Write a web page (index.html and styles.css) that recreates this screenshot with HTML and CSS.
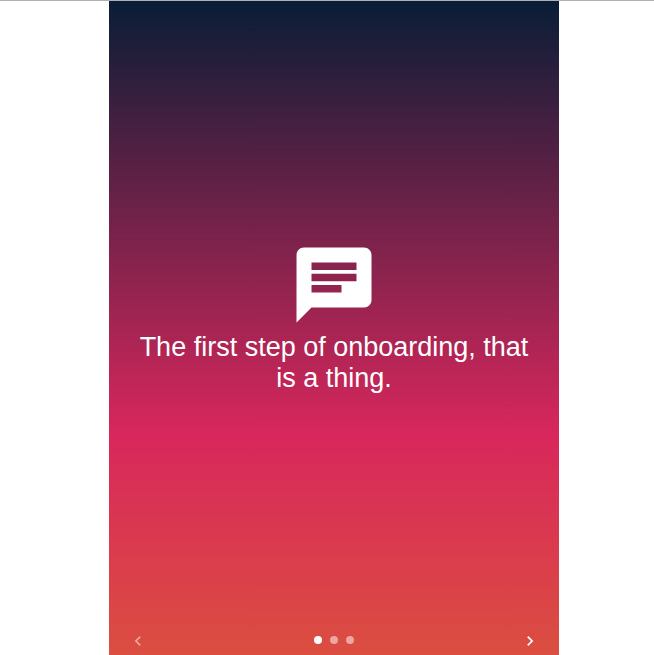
FILE: index.html
```html
<!DOCTYPE html>
<html lang="en">
<head>
<meta charset="utf-8">
<meta name="viewport" content="width=device-width, initial-scale=1">
<title>Onboarding</title>
<link rel="stylesheet" href="styles.css">
</head>
<body>
<main class="onboarding">
  <section class="step">
    <svg class="step-icon" viewBox="0 0 24 24" aria-hidden="true"><path d="M20 2H4c-1.100 0-1.990.9-1.990 2L2 22l4-4h14c1.100 0 2-.9 2-2V4c0-1.100-.9-2-2-2zM6 9h12v2H6V9zm8 5H6v-2h8v2zm4-6H6V6h12v2z"/></svg>
    <p class="step-text">The first step of onboarding, that is a thing.</p>
  </section>
  <nav class="controls" aria-label="Steps">
    <button class="arrow" type="button" aria-label="Previous" disabled><svg viewBox="0 0 24 24"><path d="M15.410 7.410L14 6l-6 6 6 6 1.410-1.410L10.830 12z"/></svg></button>
    <div class="dots">
      <button class="dot active" type="button" aria-label="Step 1" aria-current="step"></button>
      <button class="dot" type="button" aria-label="Step 2"></button>
      <button class="dot" type="button" aria-label="Step 3"></button>
    </div>
    <button class="arrow" type="button" aria-label="Next"><svg viewBox="0 0 24 24"><path d="M10 6L8.590 7.410 13.170 12l-4.580 4.590L10 18l6-6z"/></svg></button>
  </nav>
</main>
</body>
</html>
```
FILE: styles.css
```css
* {
  box-sizing: border-box;
}

body {
  margin: 0;
  min-height: 100vh;
  padding-left: 14px;
  border-top: 1px solid #b0b0b0;
  display: flex;
  justify-content: center;
  background: #fff;
  font-family: "Liberation Sans", Arial, sans-serif;
}

.onboarding {
  width: 100%;
  max-width: 450px;
  display: flex;
  flex-direction: column;
  color: #fff;
  background: linear-gradient(#091d36, #d8275c 66%, #db4e40);
}

.step {
  flex: 1;
  display: flex;
  flex-direction: column;
  align-items: center;
  justify-content: center;
  padding: 1px 24px 0;
}

.step-icon {
  width: 90px;
  height: 90px;
  fill: currentColor;
}

.step-text {
  margin: 2px 0 0;
  font-size: 27px;
  line-height: 31px;
  text-align: center;
}

.controls {
  display: flex;
  align-items: center;
  justify-content: space-between;
  padding: 0 19px 4px;
}

button {
  padding: 0;
  border: 0;
  color: inherit;
  background: none;
}

.arrow svg {
  display: block;
  width: 20px;
  height: 20px;
  fill: currentColor;
}

.arrow:disabled {
  opacity: 0.5;
}

.dots {
  display: flex;
  gap: 8px;
  padding-bottom: 3px;
}

.dot {
  width: 8px;
  height: 8px;
  border-radius: 50%;
  background: #fff;
  opacity: 0.5;
}

.dot.active {
  opacity: 1;
}
```
